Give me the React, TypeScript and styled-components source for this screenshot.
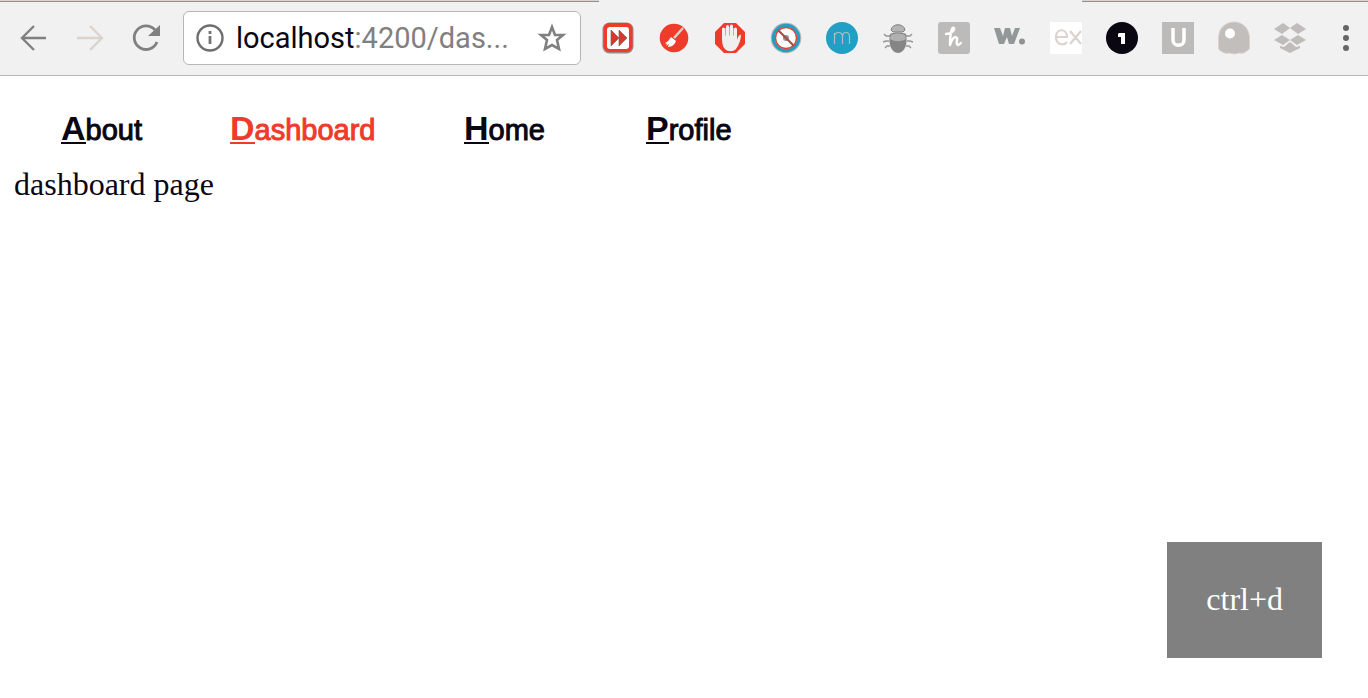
import React from 'react';
import styled, { createGlobalStyle } from 'styled-components';

const Global = createGlobalStyle`
  * { box-sizing: border-box; }
  body { margin: 0; background: #fff; color: #0a0612; }
  #root { min-height: 100vh; display: flex; flex-direction: column; }
`;

const TabStrip = styled.div`
  display: grid;
  grid-template-columns: 599fr 483fr 286fr;
  height: 2px;
  background: #f1f1f1;
`;

const TabEdge = styled.div<{ $active?: boolean }>`
  border-bottom: ${p => (p.$active ? '0' : '1px solid #95908e')};
  background: ${p => (p.$active ? '#f1f1f1' : '#dcd3ce')};
`;

const Toolbar = styled.header`
  display: flex;
  align-items: center;
  height: 74px;
  padding: 0 4px 2px 16px;
  background: #f1f1f1;
  border-bottom: 1px solid #b6b6b6;
`;

const IconButton = styled.button`
  display: flex;
  align-items: center;
  justify-content: center;
  flex: none;
  width: 36px;
  height: 36px;
  padding: 0;
  border: 0;
  background: none;
`;

const History = styled.div`
  display: flex;
  gap: 20px;
  margin-right: 19px;
`;

const AddressBar = styled.div`
  display: flex;
  align-items: center;
  flex: 1;
  min-width: 0;
  height: 54px;
  padding: 0 10px 0 8px;
  background: #fff;
  border: 1px solid #b6b6b6;
  border-radius: 6px;
`;

const Address = styled.a`
  flex: 1;
  min-width: 0;
  margin-left: 8px;
  overflow: hidden;
  white-space: nowrap;
  font: 29px/36px Roboto, sans-serif;
  color: #808080;
  text-decoration: none;
`;

const Host = styled.span`
  color: #0a0612;
`;

const Extensions = styled.div`
  display: flex;
  gap: 20px;
  margin-left: 19px;
`;

const Page = styled.main`
  position: relative;
  display: flex;
  flex-direction: column;
  flex: 1;
  padding: 30px 14px;
`;

const Nav = styled.nav`
  display: grid;
  grid-template-columns: 169px 234px 182px auto;
  justify-content: start;
  padding-left: 47px;
`;

const NavLink = styled.a<{ $active?: boolean }>`
  font: 29px/48px "Liberation Sans", Arial, sans-serif;
  color: ${p => (p.$active ? '#ee3b2a' : '#0a0612')};
  text-decoration: none;
  -webkit-text-stroke: 1px currentColor;
`;

const Key = styled.span`
  display: inline-block;
  font-size: 34px;
  line-height: 28px;
  font-weight: bold;
  border-bottom: 2px solid currentColor;
  -webkit-text-stroke: 0;
`;

const Text = styled.p`
  margin: 12px 0 0;
  font: 32px/36px "Liberation Serif", "Times New Roman", serif;
`;

const Shortcut = styled.div`
  position: absolute;
  right: 46px;
  bottom: 40px;
  padding: 39px 39px 41px;
  background: #808080;
  color: #fff;
  font: 32px/36px "Liberation Serif", "Times New Roman", serif;
`;

const Svg = ({ children }: { children: React.ReactNode }) => (
  <svg width="36" height="36" viewBox="0 0 36 36" fill="none" aria-hidden="true">{children}</svg>
);

const extensions: { name: string; art: React.ReactNode }[] = [
  {
    name: 'Fast forward',
    art: <>
      <rect x="2.5" y="2.5" width="31" height="31" rx="7" fill="#9b8c88" />
      <rect x="3.5" y="3" width="29" height="29" rx="6" fill="#ee3b2a" />
      <rect x="7" y="7" width="22" height="22" rx="3" fill="#fff" />
      <path d="M11 10l8 8-8 8zM19 10l8 8-8 8z" fill="#d6382b" stroke="#806762" strokeWidth=".7" />
    </>,
  },
  {
    name: 'Clean',
    art: <>
      <circle cx="18" cy="18" r="14.3" fill="#ee3b2a" />
      <path d="M27 8L18 18" stroke="#ddd3ce" strokeWidth="2.4" />
      <path d="M15 17l5 4c-1 3-4 6-8 6l1-3-3 2 1-2-2-1c3-1 4-3 6-6z" fill="#fff" />
    </>,
  },
  {
    name: 'Blocker',
    art: <>
      <path d="M12 3h12l9 9v12l-9 9H12l-9-9V12z" fill="#ee3b2a" />
      <path d="M11.500 18V9M15.500 16V6.500M19.500 16V6M23.500 17V9" stroke="#f1efed" strokeWidth="3" strokeLinecap="round" />
      <path d="M10 15h15v5c1-4 3-6 4-5 0 4-2 10-5 14-3 3-8 3-11 0-3-3-3-8-3-14z" fill="#f1efed" />
      <path d="M13.500 8v8M17.500 7v9M21.500 8v8" stroke="#ddb9b2" strokeWidth=".8" />
    </>,
  },
  {
    name: 'Disable',
    art: <>
      <circle cx="18" cy="18" r="15.3" fill="#b8b4b2" />
      <circle cx="18" cy="18" r="12.6" fill="#fff" stroke="#229fc4" strokeWidth="3.2" />
      <circle cx="18" cy="18" r="10.5" stroke="#d84a3d" strokeWidth="1.5" />
      <circle cx="18" cy="18" r="3" fill="#929292" />
      <path d="M10 10l16 16" stroke="#9d5148" strokeWidth="2.2" />
    </>,
  },
  {
    name: 'Momentum',
    art: <>
      <circle cx="18" cy="18" r="16" fill="#229fc4" />
      <path d="M10.500 24V13M10.500 17c0-6 8-6 8 0v7M18.500 17c0-6 7-6 7 0v7" stroke="#a9bfc5" strokeWidth="1.2" />
    </>,
  },
  {
    name: 'Bug',
    art: <>
      <path d="M11 10c1-7 13-7 14 0l-2 2H13z" fill="#b4b4b4" stroke="#818181" />
      <path d="M10 16H6l-2-2M9 21H6l-3 1M10 26H7l-2 2M26 16h4l2-2M27 21h3l3 1M26 26h3l2 2" stroke="#969696" strokeWidth="1.4" />
      <path d="M10 14c4-2 12-2 16 0 2 9-1 19-8 19S8 23 10 14z" fill="#858585" />
      <path d="M11 15c4-2 10-2 14 0l1 4c-5 3-11 3-16 0z" fill="#b0b0b0" />
    </>,
  },
  {
    name: 'Honey',
    art: <>
      <rect x="2" y="2" width="32" height="32" rx="3" fill="#bdbbb9" />
      <path d="M10 14c5 0 9-4 8-6-2-2-4 5-4 17 2-7 5-9 7-7 1 2-2 6 1 7 1 0 2-1 3-2" stroke="#fff" strokeWidth="2.4" strokeLinecap="round" strokeLinejoin="round" />
    </>,
  },
  {
    name: 'Wappalyzer',
    art: <>
      <path d="M2 8h6l3 8 2-8h5l2 8 3-8h5l-6 16h-5l-2-7-3 7H7z" fill="#929797" />
      <circle cx="30" cy="21.500" r="3" fill="#929292" />
    </>,
  },
  {
    name: 'Express',
    art: <>
      <path d="M2 2h32v32H2z" fill="#fff" />
      <path d="M8 17h11c0-9-11-9-11 0 0 8 8 9 11 5M22 11l11 13M33 11L22 24" stroke="#dcd3cf" strokeWidth="2.200" />
    </>,
  },
  {
    name: 'One',
    art: <>
      <circle cx="18" cy="18" r="16" fill="#0a0612" />
      <path d="M15 13h6v11h-4v-7h-3v-3z" fill="#fff" />
    </>,
  },
  {
    name: 'Ublock',
    art: <>
      <path d="M2 2h32v32H2z" fill="#bdbbb9" />
      <path d="M13 8v12c0 7 11 7 11 0V8" stroke="#fff" strokeWidth="3.500" />
    </>,
  },
  {
    name: 'Ghost',
    art: <>
      <path d="M2.500 17C4-3 32-3 33.500 17v12c-4 3-6 5-10 4l-5 1-5-1c-5 1-8-1-11-4z" fill="#c2bebc" stroke="#ddd2cd" />
      <circle cx="14" cy="13.500" r="5" fill="#fff" />
    </>,
  },
  {
    name: 'Dropbox',
    art: <path d="M2 9l9-6 7 5-8 6zM18 8l7-5 9 6-8 5zM2 20l8-5 8 5-7 5zM18 20l8-5 8 5-9 5zM8 26l4 1 6-5 6 5 4-1v2l-10 5-10-5z" fill="#bfbcba" />,
  },
  {
    name: 'Menu',
    art: <g fill="#656565"><circle cx="18" cy="8" r="3" /><circle cx="18" cy="18" r="3" /><circle cx="18" cy="28" r="3" /></g>,
  },
];

const links = ['About', 'Dashboard', 'Home', 'Profile'];

export default function App() {
  return (
    <>
      <Global />
      <TabStrip><TabEdge /><TabEdge $active /><TabEdge /></TabStrip>
      <Toolbar>
        <History>
          <IconButton aria-label="Back"><Svg><path d="M30 18H7M18 6L6 18l12 12" stroke="#808080" strokeWidth="2.400" /></Svg></IconButton>
          <IconButton aria-label="Forward"><Svg><path d="M5 18h24M18 6l12 12-12 12" stroke="#dcd3cd" strokeWidth="2.400" /></Svg></IconButton>
          <IconButton aria-label="Reload"><Svg>
            <path d="M27 10A11.800 11.800 0 1 0 29 22" stroke="#808080" strokeWidth="2.800" />
            <path d="M32 5v11H20z" fill="#808080" />
          </Svg></IconButton>
        </History>
        <AddressBar>
          <IconButton aria-label="Site information"><Svg>
            <circle cx="18" cy="18" r="12.500" stroke="#6e6e6e" strokeWidth="2.400" />
            <path d="M18 16v8M18 11v3" stroke="#747474" strokeWidth="2.800" />
          </Svg></IconButton>
          <Address href="#dashboard"><Host>localhost</Host>:4200/das...</Address>
          <IconButton aria-label="Bookmark"><Svg>
            <path d="M18 7l3 8h8l-6 5 2 9-7-4-7 4 2-9-6-5h8z" stroke="#808080" strokeWidth="2.600" />
          </Svg></IconButton>
        </AddressBar>
        <Extensions>
          {extensions.map(e => <IconButton key={e.name} aria-label={e.name}><Svg>{e.art}</Svg></IconButton>)}
        </Extensions>
      </Toolbar>
      <Page>
        <Nav>
          {links.map(l => (
            <NavLink key={l} href={`#${l.toLowerCase()}`} $active={l === 'Dashboard'}>
              <Key>{l[0]}</Key>{l.slice(1)}
            </NavLink>
          ))}
        </Nav>
        <Text>dashboard page</Text>
        <Shortcut>ctrl+d</Shortcut>
      </Page>
    </>
  );
}
